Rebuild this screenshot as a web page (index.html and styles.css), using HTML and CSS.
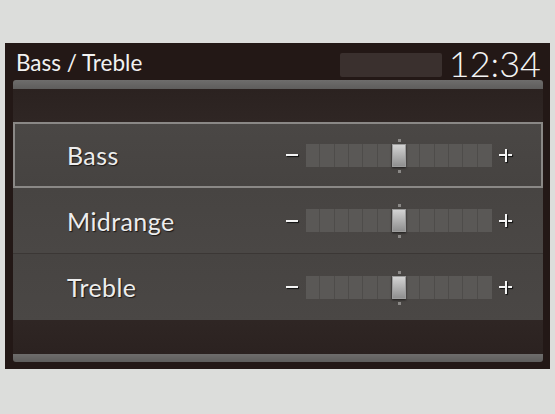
FILE: index.html
```html
<!DOCTYPE html>
<html>
<head>
<meta charset="utf-8">
<link rel="stylesheet" href="styles.css">
</head>
<body>
<div class="screen">
  <div class="header">
    <div class="title">Bass / Treble</div>
    <div class="status-box"></div>
    <div class="clock">12:34</div>
  </div>
  <div class="panel">
    <div class="bar bar-top"></div>
    <div class="gap"></div>
    <div class="rows">
      <div class="row selected">
        <div class="label">Bass</div>
        <div class="control">
          <span class="minus"></span>
          <div class="track">
            <i></i><i></i><i></i><i></i><i></i><i></i>
            <b class="thumb"></b>
            <i></i><i></i><i></i><i></i><i></i><i></i>
          </div>
          <span class="plus"></span>
        </div>
      </div>
      <div class="row">
        <div class="label">Midrange</div>
        <div class="control">
          <span class="minus"></span>
          <div class="track">
            <i></i><i></i><i></i><i></i><i></i><i></i>
            <b class="thumb"></b>
            <i></i><i></i><i></i><i></i><i></i><i></i>
          </div>
          <span class="plus"></span>
        </div>
      </div>
      <div class="row">
        <div class="label">Treble</div>
        <div class="control">
          <span class="minus"></span>
          <div class="track">
            <i></i><i></i><i></i><i></i><i></i><i></i>
            <b class="thumb"></b>
            <i></i><i></i><i></i><i></i><i></i><i></i>
          </div>
          <span class="plus"></span>
        </div>
      </div>
    </div>
    <div class="gap gap-bottom"></div>
    <div class="bar bar-bottom"></div>
  </div>
</div>
</body>
</html>
```

FILE: styles.css
```css
html, body {
  margin: 0;
  padding: 0;
}
body {
  background: #dcdddb;
  width: 555px;
  height: 414px;
  overflow: hidden;
  font-family: Lato, "Open Sans", sans-serif;
  padding-top: 43px;
  box-sizing: border-box;
}
.screen {
  margin-left: 5px;
  width: 545px;
  height: 326px;
  background: #231816;
  display: flex;
  flex-direction: column;
}
.header {
  height: 37px;
  display: flex;
  align-items: center;
  padding: 0 9px 0 11px;
}
.title {
  color: #f2f2f2;
  font-size: 22.5px;
  flex: 1;
  padding-top: 2px;
}
.status-box {
  width: 102px;
  height: 24px;
  background: #3a302e;
  border-radius: 2px;
  margin-right: 7px;
  margin-top: 6px;
}
.clock {
  color: #f4f4f4;
  font-size: 36px;
  font-weight: 300;
  line-height: 1;
  margin-top: 2px;
}
.panel {
  margin-left: 8px;
  width: 530px;
  display: flex;
  flex-direction: column;
}
.bar {
  background: linear-gradient(#6e6d6c, #5e5d5c);
}
.bar-top {
  height: 9px;
  border-radius: 3px 3px 0 0;
}
.bar-bottom {
  height: 8px;
  border-radius: 0 0 3px 3px;
}
.gap {
  height: 33px;
  background: linear-gradient(#2b2220, #2f2624);
}
.gap-bottom {
  height: 34px;
  background: linear-gradient(#2f2624, #2b2220);
}
.rows {
  display: flex;
  flex-direction: column;
  background: #474341;
}
.row {
  height: 66px;
  box-sizing: border-box;
  display: flex;
  align-items: center;
  padding: 0 31px 0 54px;
  border-bottom: 1px solid #3b3735;
  background: linear-gradient(#474442, #4a4745);
}
.row:last-child {
  border-bottom: none;
}
.row.selected {
  border: 2px solid #8a8886;
  padding-left: 52px;
  padding-right: 29px;
  background: linear-gradient(#4a4745, #464341);
}
.label {
  flex: 1;
  color: #ededed;
  font-size: 25px;
  letter-spacing: 0.4px;
  text-shadow: 1px 1px 1px #1a1716;
}
.control {
  display: flex;
  align-items: center;
}
.minus {
  width: 12px;
  height: 2px;
  background: #f4f4f4;
  box-shadow: 1px 1px 1px #111;
  margin-right: 8px;
}
.plus {
  position: relative;
  width: 13px;
  height: 13px;
  margin-left: 7px;
}
.plus::before,
.plus::after {
  content: "";
  position: absolute;
  background: #f4f4f4;
  box-shadow: 1px 1px 1px #111;
}
.plus::before {
  left: 0;
  top: 5.5px;
  width: 13px;
  height: 2px;
}
.plus::after {
  left: 5.5px;
  top: 0;
  width: 2px;
  height: 13px;
}
.track {
  display: grid;
  grid-template-columns: repeat(13, 1fr);
  width: 186px;
  height: 23px;
}
.track i {
  background: #5a5856;
  border-right: 1px solid #4e4c4a;
}
.track i:last-child {
  border-right: none;
}
.thumb {
  position: relative;
  background: linear-gradient(#d6d6d6, #8c8c8c);
  box-shadow: 0 1px 2px #1d1b1a, inset 0 0 0 1px #9c9c9c;
}
.thumb::before,
.thumb::after {
  content: "";
  position: absolute;
  left: 6px;
  width: 3px;
  height: 3px;
  background: #8a8886;
}
.thumb::before {
  top: -5px;
}
.thumb::after {
  bottom: -6px;
}
```
